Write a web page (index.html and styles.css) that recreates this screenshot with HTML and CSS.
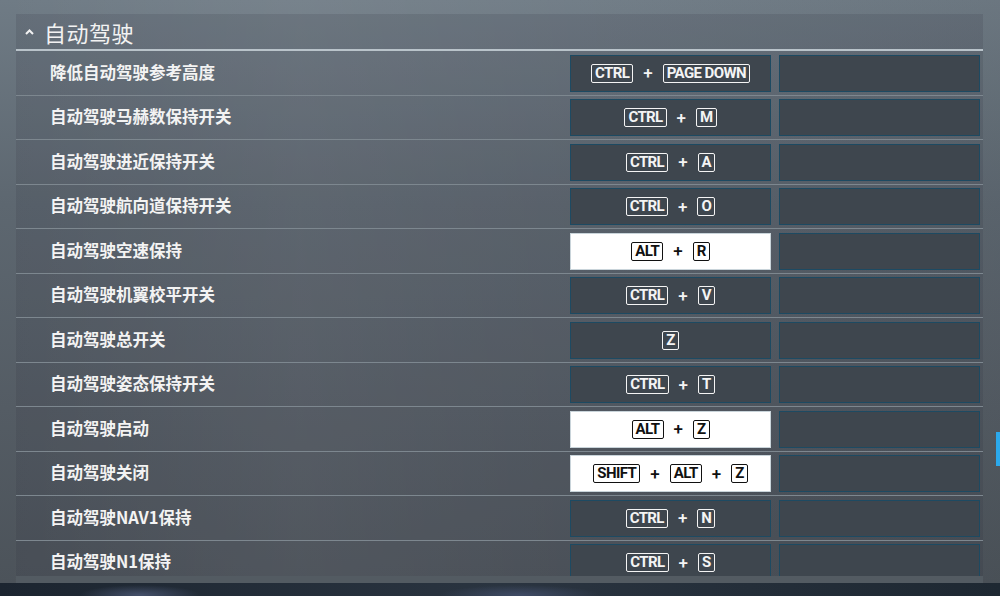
FILE: index.html
```html
<!DOCTYPE html>
<html lang="zh-CN">
<head>
  <meta charset="UTF-8">
  <title>自动驾驶</title>
  <link rel="stylesheet" href="styles.css">
</head>
<body>
<div class="screen">
  <div class="panel">
    <div class="section-head">
      <svg class="caret" width="9" height="6" viewBox="0 0 9 6"><path d="M1 5 L4.5 1.5 L8 5" fill="none" stroke="#f2f2f2" stroke-width="2"/></svg>
      <span class="section-title">自动驾驶</span>
    </div>
    <div class="list">
      <div class="row">
        <div class="label">降低自动驾驶参考高度</div>
        <div class="bind"><span class="key">CTRL</span><span class="plus">+</span><span class="key">PAGE DOWN</span></div>
        <div class="bind"></div>
      </div>
      <div class="row">
        <div class="label">自动驾驶马赫数保持开关</div>
        <div class="bind"><span class="key">CTRL</span><span class="plus">+</span><span class="key">M</span></div>
        <div class="bind"></div>
      </div>
      <div class="row">
        <div class="label">自动驾驶进近保持开关</div>
        <div class="bind"><span class="key">CTRL</span><span class="plus">+</span><span class="key">A</span></div>
        <div class="bind"></div>
      </div>
      <div class="row">
        <div class="label">自动驾驶航向道保持开关</div>
        <div class="bind"><span class="key">CTRL</span><span class="plus">+</span><span class="key">O</span></div>
        <div class="bind"></div>
      </div>
      <div class="row">
        <div class="label">自动驾驶空速保持</div>
        <div class="bind active"><span class="key">ALT</span><span class="plus">+</span><span class="key">R</span></div>
        <div class="bind"></div>
      </div>
      <div class="row">
        <div class="label">自动驾驶机翼校平开关</div>
        <div class="bind"><span class="key">CTRL</span><span class="plus">+</span><span class="key">V</span></div>
        <div class="bind"></div>
      </div>
      <div class="row">
        <div class="label">自动驾驶总开关</div>
        <div class="bind"><span class="key">Z</span></div>
        <div class="bind"></div>
      </div>
      <div class="row">
        <div class="label">自动驾驶姿态保持开关</div>
        <div class="bind"><span class="key">CTRL</span><span class="plus">+</span><span class="key">T</span></div>
        <div class="bind"></div>
      </div>
      <div class="row">
        <div class="label">自动驾驶启动</div>
        <div class="bind active"><span class="key">ALT</span><span class="plus">+</span><span class="key">Z</span></div>
        <div class="bind"></div>
      </div>
      <div class="row">
        <div class="label">自动驾驶关闭</div>
        <div class="bind active"><span class="key">SHIFT</span><span class="plus">+</span><span class="key">ALT</span><span class="plus">+</span><span class="key">Z</span></div>
        <div class="bind"></div>
      </div>
      <div class="row">
        <div class="label">自动驾驶NAV1保持</div>
        <div class="bind"><span class="key">CTRL</span><span class="plus">+</span><span class="key">N</span></div>
        <div class="bind"></div>
      </div>
      <div class="row">
        <div class="label">自动驾驶N1保持</div>
        <div class="bind"><span class="key">CTRL</span><span class="plus">+</span><span class="key">S</span></div>
        <div class="bind"></div>
      </div>
    </div>
    <div class="panel-foot"></div>
  </div>
  <div class="scrollbar"></div>
</div>
<div class="backdrop"></div>
</body>
</html>
```

FILE: styles.css
```css
* {
  box-sizing: border-box;
}
body {
  margin: 0;
  width: 1000px;
  height: 596px;
  overflow: hidden;
  font-family: "Noto Sans CJK SC", "Noto Sans", sans-serif;
  background: #1d2733;
}
.screen {
  position: relative;
  height: 583px;
  padding-top: 14px;
  background:
    linear-gradient(90deg, rgba(255,255,255,0.00) 0%, rgba(255,255,255,0.06) 30%, rgba(255,255,255,0.02) 60%, rgba(0,0,0,0.04) 100%),
    linear-gradient(180deg, #6f7b85 0%, #5d6770 35%, #545c64 70%, #4c535a 100%);
}
.panel {
  margin-left: 16px;
  width: 967px;
  background: rgba(40, 46, 54, 0.14);
}
.section-head {
  display: flex;
  align-items: center;
  height: 37px;
  padding-left: 9px;
  border-bottom: 2px solid #b9c3ca;
  color: #f2f2f2;
}
.caret {
  margin-right: 10px;
  margin-top: 1px;
}
.section-title {
  font-size: 22px;
  font-weight: 400;
  letter-spacing: 0.5px;
}
.list {
  height: 525px;
  overflow: hidden;
}
.row {
  display: flex;
  align-items: center;
  gap: 8px;
  height: 44.5px;
  padding-right: 3px;
  border-bottom: 1px solid #7d878f;
}
.label {
  flex: 1;
  padding-left: 34px;
  padding-bottom: 2px;
  color: #f3f3f3;
  font-size: 16.5px;
  font-weight: 700;
}
.bind {
  display: flex;
  align-items: center;
  justify-content: center;
  gap: 10px;
  width: 201px;
  height: 37px;
  margin-top: 1px;
  background: #3e464e;
  border: 1px solid #1d4a62;
  color: #f4f4f4;
  font-family: Roboto, "Liberation Sans", sans-serif;
}
.bind.active {
  background: #ffffff;
  border-color: #c9d4da;
  color: #111111;
}
.key {
  display: inline-block;
  padding: 0 3px;
  height: 19px;
  line-height: 16px;
  border: 1.5px solid currentColor;
  border-radius: 2px;
  font-size: 15px;
  font-weight: 700;
  letter-spacing: -0.6px;
}
.plus {
  font-size: 17px;
  font-weight: 500;
}
.panel-foot {
  height: 7px;
  background: #535b62;
}
.scrollbar {
  position: absolute;
  right: 0;
  top: 432px;
  width: 4px;
  height: 34px;
  background: #2ba9ec;
}
.backdrop {
  height: 13px;
  background:
    radial-gradient(ellipse 60px 10px at 140px 12px, #44506a 0%, rgba(0,0,0,0) 100%),
    radial-gradient(ellipse 80px 10px at 520px 12px, #3f4b65 0%, rgba(0,0,0,0) 100%),
    linear-gradient(90deg, #1c2530 0%, #2a3440 50%, #1e2832 100%);
}
```
